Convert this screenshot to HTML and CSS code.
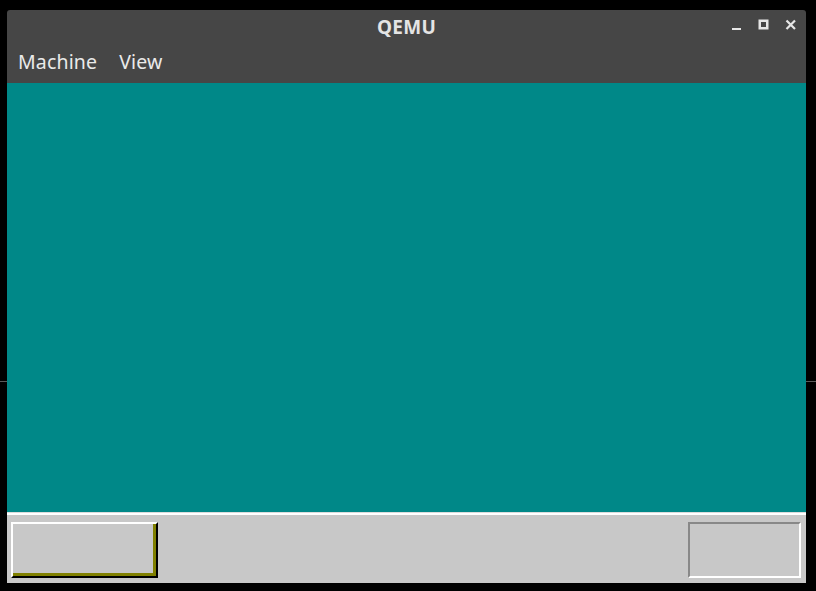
FILE: index.html
```html
<!DOCTYPE html>
<html>
<head>
<meta charset="utf-8">
<link rel="stylesheet" href="styles.css">
</head>
<body>
<div class="guide"></div>
<div class="window">
  <div class="titlebar">
    <div class="title-row">
      <span class="title">QEMU</span>
      <div class="controls">
        <svg class="ctl" width="12" height="12" viewBox="0 0 12 12"><rect x="1" y="9" width="9" height="2" fill="#e6e6e6"/></svg>
        <svg class="ctl" width="12" height="12" viewBox="0 0 12 12"><rect x="1.75" y="1.75" width="7.5" height="7.5" fill="none" stroke="#e6e6e6" stroke-width="2.5"/></svg>
        <svg class="ctl" width="12" height="12" viewBox="0 0 12 12"><path d="M1.5 1.5 L10 10 M10 1.5 L1.5 10" stroke="#e6e6e6" stroke-width="2.2"/></svg>
      </div>
    </div>
    <div class="menu">
      <span class="menu-item">Machine</span>
      <span class="menu-item">View</span>
    </div>
  </div>
  <div class="screen"></div>
  <div class="taskbar">
    <div class="btn-raised"></div>
    <div class="btn-sunken"></div>
  </div>
</div>
</body>
</html>
```
FILE: styles.css
```css
html, body {
  margin: 0;
  padding: 0;
}
body {
  background: #000;
  width: 816px;
  height: 591px;
  overflow: hidden;
  position: relative;
  font-family: "Noto Sans", "Open Sans", sans-serif;
}
.guide {
  position: absolute;
  left: 0;
  right: 0;
  top: 381px;
  height: 1px;
  background: #5a5a5a;
}
.window {
  position: relative;
  margin: 10px 0 0 7px;
  width: 799px;
  height: 573px;
  display: flex;
  flex-direction: column;
  border-radius: 3px 3px 0 0;
  overflow: hidden;
}
.titlebar {
  background: #464646;
  height: 73px;
  flex-shrink: 0;
  display: flex;
  flex-direction: column;
}
.title-row {
  height: 34px;
  display: flex;
  align-items: center;
  justify-content: center;
  position: relative;
}
.title {
  color: #e4e4e4;
  font-weight: bold;
  font-size: 19px;
  letter-spacing: 0.3px;
}
.controls {
  position: absolute;
  right: 9px;
  top: 9px;
  display: flex;
  gap: 15px;
}
.menu {
  display: flex;
  gap: 22px;
  padding-left: 11px;
  height: 39px;
  align-items: center;
  padding-bottom: 4px;
  box-sizing: border-box;
}
.menu-item {
  color: #eaeaea;
  font-size: 19.5px;
  letter-spacing: 0.15px;
}
.screen {
  background: #008888;
  height: 429px;
  flex-shrink: 0;
}
.taskbar {
  flex: 1;
  background: #c8c8c8;
  border-top: 1px solid #dcdcdc;
  box-shadow: inset 0 2px 0 #ffffff;
  display: flex;
  justify-content: space-between;
  align-items: flex-start;
  padding: 9px 5px 4px 4px;
}
.btn-raised {
  width: 147px;
  height: 56px;
  box-sizing: border-box;
  border-top: 2px solid #ffffff;
  border-left: 2px solid #ffffff;
  border-right: 2px solid #000;
  border-bottom: 2px solid #000;
  box-shadow: inset -3px -3px 0 #808000;
  background: #c8c8c8;
}
.btn-sunken {
  width: 113px;
  height: 56px;
  box-sizing: border-box;
  border-top: 2px solid #888888;
  border-left: 2px solid #888888;
  border-right: 2px solid #ffffff;
  border-bottom: 2px solid #ffffff;
  background: #c8c8c8;
}
```
